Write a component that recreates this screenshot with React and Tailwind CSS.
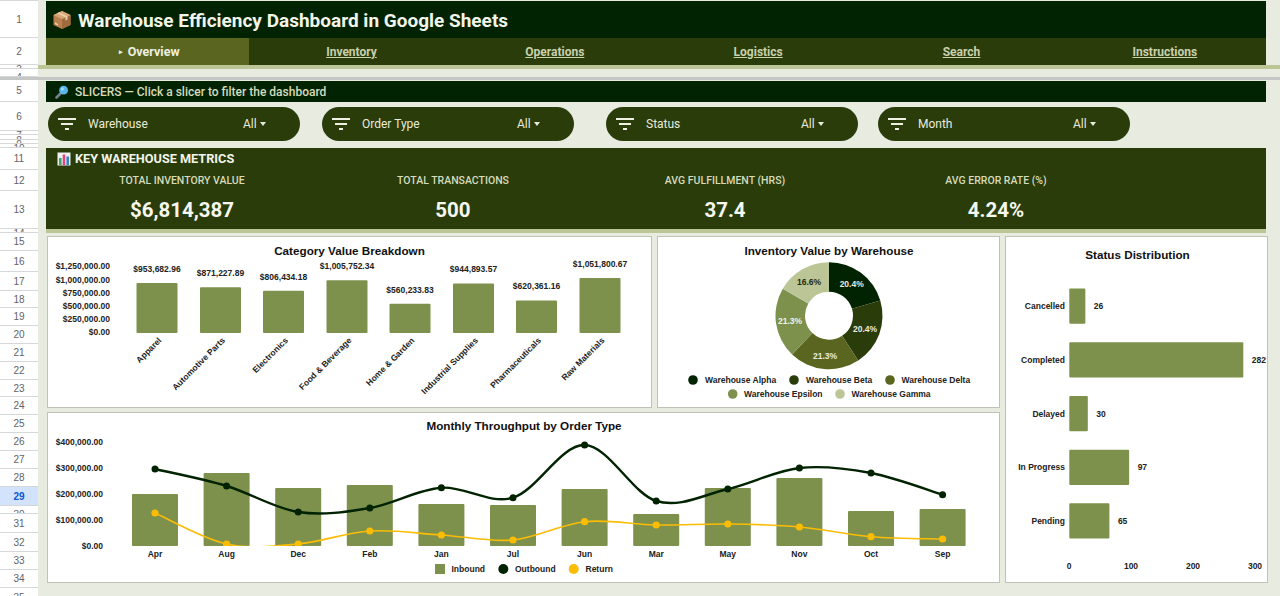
const rowHeaders = [
    ["", 1], ["1", 37], ["2", 27], ["3", 4], ["4", 8], ["", 3], ["5", 22], ["6", 29], ["7", 4], ["8", 5], ["9", 4], ["10", 4],
    ["11", 22], ["12", 21], ["13", 38], ["14", 4], ["15", 18], ["16", 21], ["17", 19], ["18", 17], ["19", 18], ["20", 18],
    ["21", 18], ["22", 18], ["23", 17], ["24", 18], ["25", 18], ["26", 18], ["27", 18], ["28", 18], ["29", 19], ["30", 8],
    ["31", 19], ["32", 19], ["33", 18], ["34", 18], ["35", 9],
];

const tabs = ["Inventory", "Operations", "Logistics", "Search", "Instructions"];

const slicers = [
    { name: "Warehouse", gap: "ml-[2px]" },
    { name: "Order Type", gap: "ml-[22px]" },
    { name: "Status", gap: "ml-[32px]" },
    { name: "Month", gap: "ml-[20px]" },
];

const metrics = [
    { label: "TOTAL INVENTORY VALUE", value: "$6,814,387" },
    { label: "TOTAL TRANSACTIONS", value: "500" },
    { label: "AVG FULFILLMENT (HRS)", value: "37.4" },
    { label: "AVG ERROR RATE (%)", value: "4.24%" },
];

const categories = [
    { name: "Apparel", value: 953682.96, label: "$953,682.96", x: 157 },
    { name: "Automotive Parts", value: 871227.89, label: "$871,227.89", x: 220.5 },
    { name: "Electronics", value: 806434.18, label: "$806,434.18", x: 283.5 },
    { name: "Food & Beverage", value: 1005752.34, label: "$1,005,752.34", x: 347 },
    { name: "Home & Garden", value: 560233.83, label: "$560,233.83", x: 410 },
    { name: "Industrial Supplies", value: 944893.57, label: "$944,893.57", x: 473.5 },
    { name: "Pharmaceuticals", value: 620361.16, label: "$620,361.16", x: 536.5 },
    { name: "Raw Materials", value: 1051800.67, label: "$1,051,800.67", x: 600 },
];

const slices = [
    { pct: 20.4, color: "#012301", lx: 851.7, ly: 284.3, text: "#e8ebe0" },
    { pct: 20.4, color: "#2a3c0a", lx: 865, ly: 329, text: "#e8ebe0" },
    { pct: 21.3, color: "#5a6620", lx: 825, ly: 355.7, text: "#e8ebe0" },
    { pct: 21.3, color: "#7d914d", lx: 790, ly: 321, text: "#f1f3e8" },
    { pct: 16.6, color: "#bcc596", lx: 809, ly: 282.3, text: "#1f2a10" },
];

const months = [
    { m: "Apr", top: 494, out: 469, ret: 513 },
    { m: "Aug", top: 473, out: 486, ret: 544 },
    { m: "Dec", top: 488, out: 512, ret: 544 },
    { m: "Feb", top: 485, out: 508, ret: 531 },
    { m: "Jan", top: 504, out: 487.7, ret: 535 },
    { m: "Jul", top: 505, out: 497.7, ret: 540 },
    { m: "Jun", top: 489, out: 445, ret: 521.7 },
    { m: "Mar", top: 514, out: 501, ret: 525 },
    { m: "May", top: 488, out: 489, ret: 524 },
    { m: "Nov", top: 478, out: 468, ret: 527 },
    { m: "Oct", top: 511, out: 473, ret: 536.7 },
    { m: "Sep", top: 509, out: 494.7, ret: 539 },
];

const statuses = [
    { name: "Cancelled", value: 26, y: 288.5 },
    { name: "Completed", value: 282, y: 342.3 },
    { name: "Delayed", value: 30, y: 396 },
    { name: "In Progress", value: 97, y: 449.7 },
    { name: "Pending", value: 65, y: 503.3 },
];

// smooth line through points, same idea as the chart's "function" curve
function smoothPath(points) {
    let d = `M${points[0][0]} ${points[0][1]}`;
    for (let i = 0; i < points.length - 1; i++) {
        const p0 = points[i - 1] || points[i];
        const p1 = points[i];
        const p2 = points[i + 1];
        const p3 = points[i + 2] || p2;
        const c1x = p1[0] + (p2[0] - p0[0]) / 6;
        const c1y = p1[1] + (p2[1] - p0[1]) / 6;
        const c2x = p2[0] - (p3[0] - p1[0]) / 6;
        const c2y = p2[1] - (p3[1] - p1[1]) / 6;
        d += ` C${c1x} ${c1y} ${c2x} ${c2y} ${p2[0]} ${p2[1]}`;
    }
    return d;
}

function slicePath(cx, cy, r1, r2, from, to) {
    const pt = (r, pct) => {
        const a = (pct / 100) * Math.PI * 2 - Math.PI / 2;
        return `${cx + r * Math.cos(a)} ${cy + r * Math.sin(a)}`;
    };
    const large = to - from > 50 ? 1 : 0;
    return `M${pt(r1, from)} A${r1} ${r1} 0 ${large} 1 ${pt(r1, to)} L${pt(r2, to)} A${r2} ${r2} 0 ${large} 0 ${pt(r2, from)} Z`;
}

function PackageIcon() {
    return (
        <svg width="20" height="20" viewBox="0 0 20 20" className="shrink-0">
            <path d="M10 1 L18.5 5 V15 L10 19 L1.5 15 V5 Z" fill="#b9814f" />
            <path d="M10 9 L18.5 5 V15 L10 19 Z" fill="#a06a3c" />
            <path d="M1.5 5 L10 1 L18.5 5 L10 9 Z" fill="#d6a878" />
            <path d="M5 3.2 L13.5 7.2 V10.5 L15.5 9.6 V6.2 L7 2.2 Z" fill="#eccfa8" />
            <path d="M3 12.5 L6 14 V15.5 L3 14 Z" fill="#e8d9c4" />
        </svg>
    );
}

function SearchIcon() {
    return (
        <svg width="14" height="14" viewBox="0 0 14 14" className="shrink-0">
            <path d="M1.5 12.5 L6 8" stroke="#7a7f8c" strokeWidth="2.6" strokeLinecap="round" />
            <circle cx="8.6" cy="5.2" r="4.4" fill="#5ab4ea" />
            <circle cx="7.4" cy="4" r="1.5" fill="#a8dcf7" />
        </svg>
    );
}

function ChartIcon() {
    return (
        <svg width="14" height="14" viewBox="0 0 14 14" className="shrink-0">
            <rect x="0.5" y="0.5" width="13" height="13" fill="#eef0f2" />
            <rect x="2" y="6" width="2.6" height="7" fill="#3aa76d" />
            <rect x="5.7" y="2.5" width="2.6" height="10.5" fill="#e0457b" />
            <rect x="9.4" y="4.5" width="2.6" height="8.5" fill="#3b82c4" />
        </svg>
    );
}

function FilterIcon() {
    return (
        <svg width="18" height="12" viewBox="0 0 18 12" className="shrink-0">
            <rect x="0" y="0" width="18" height="2" fill="#eef0e4" />
            <rect x="3" y="5" width="12" height="2" fill="#eef0e4" />
            <rect x="7" y="10" width="4" height="2" fill="#eef0e4" />
        </svg>
    );
}

function Slicer({ name, gap }) {
    return (
        <div className={`${gap} flex h-[34px] w-[252px] items-center rounded-full bg-[#2a3c0a] pl-[10px] font-['Roboto',sans-serif] text-[12px] text-[#e8ebdc]`}>
            <FilterIcon />
            <span className="ml-[12px] w-[155px]">{name}</span>
            <span>All</span>
            <span className="ml-[3px] h-0 w-0 border-x-[3.5px] border-t-[4px] border-x-transparent border-t-[#e8ebdc]" />
        </div>
    );
}

function CategoryChart() {
    const axis = [["$1,250,000.00", 266], ["$1,000,000.00", 280], ["$750,000.00", 292.5], ["$500,000.00", 306], ["$250,000.00", 319], ["$0.00", 332]];
    return (
        <svg viewBox="48 237 603 170" className="block h-full w-full font-['Liberation_Sans',sans-serif] font-bold">
            <text x="349.5" y="254.5" textAnchor="middle" fontSize="11.7" fill="#111">Category Value Breakdown</text>
            {axis.map(([label, y]) => (
                <text key={label} x="110" y={y + 3} textAnchor="end" fontSize="8.5" fill="#222">{label}</text>
            ))}
            {categories.map(c => {
                const h = (c.value / 1000000) * 52.4;
                return (
                    <g key={c.name}>
                        <rect x={c.x - 20.5} y={333 - h} width="41" height={h} rx="1" fill="#7d914d" />
                        <text x={c.x} y={333 - h - 11} textAnchor="middle" fontSize="8.5" fill="#222">{c.label}</text>
                        <text transform={`translate(${c.x + 5} 341) rotate(-45)`} textAnchor="end" fontSize="8.5" fill="#222">{c.name}</text>
                    </g>
                );
            })}
        </svg>
    );
}

function DonutChart() {
    let from = 0;
    const legend = [
        ["Warehouse Alpha", 693, 705, 380, "#012301"],
        ["Warehouse Beta", 794, 806, 380, "#2a3c0a"],
        ["Warehouse Delta", 890, 901.5, 380, "#5a6620"],
        ["Warehouse Epsilon", 732.7, 744, 394, "#7d914d"],
        ["Warehouse Gamma", 840, 851.5, 394, "#bcc596"],
    ];
    return (
        <svg viewBox="658 237 341 170" className="block h-full w-full font-['Liberation_Sans',sans-serif] font-bold">
            <text x="829" y="254.5" textAnchor="middle" fontSize="11.7" fill="#111">Inventory Value by Warehouse</text>
            {slices.map((s, i) => {
                const d = slicePath(829, 315.7, 53.5, 24, from, from + s.pct);
                from += s.pct;
                return <path key={i} d={d} fill={s.color} />;
            })}
            {slices.map((s, i) => (
                <text key={i} x={s.lx} y={s.ly + 3} textAnchor="middle" fontSize="8.5" fill={s.text}>{s.pct.toFixed(1)}%</text>
            ))}
            {legend.map(([name, cx, tx, y, color]) => (
                <g key={name}>
                    <circle cx={cx} cy={y} r="4.8" fill={color} />
                    <text x={tx} y={y + 3} fontSize="8.5" fill="#222">{name}</text>
                </g>
            ))}
        </svg>
    );
}

function StatusChart() {
    return (
        <svg viewBox="1006 237 261 345" className="block h-full w-full font-['Liberation_Sans',sans-serif] font-bold">
            <text x="1137.5" y="258.5" textAnchor="middle" fontSize="11.7" fill="#111">Status Distribution</text>
            {statuses.map(s => {
                const w = s.value * 0.617;
                return (
                    <g key={s.name}>
                        <rect x="1069.3" y={s.y} width={w} height="35.2" rx="1" fill="#7d914d" />
                        <text x="1065" y={s.y + 20.6} textAnchor="end" fontSize="8.5" fill="#222">{s.name}</text>
                        <text x={1069.3 + w + 8.5} y={s.y + 20.6} fontSize="8.5" fill="#222">{s.value}</text>
                    </g>
                );
            })}
            {[0, 100, 200, 300].map((v, i) => (
                <text key={v} x={1069 + i * 62} y="568.7" textAnchor="middle" fontSize="8.5" fill="#222">{v}</text>
            ))}
        </svg>
    );
}

function ThroughputChart() {
    const axis = [["$400,000.00", 442], ["$300,000.00", 468], ["$200,000.00", 494], ["$100,000.00", 520], ["$0.00", 545.5]];
    const xs = months.map((_, i) => 155 + i * 71.6);
    const outbound = months.map((m, i) => [xs[i], m.out]);
    const inReturn = months.map((m, i) => [xs[i], m.ret]);
    return (
        <svg viewBox="48 413 951 169" className="block h-full w-full font-['Liberation_Sans',sans-serif] font-bold">
            <defs>
                <clipPath id="plot">
                    <rect x="110" y="430" width="880" height="116" />
                </clipPath>
            </defs>
            <text x="524" y="429.5" textAnchor="middle" fontSize="11.7" fill="#111">Monthly Throughput by Order Type</text>
            {axis.map(([label, y]) => (
                <text key={label} x="103" y={y + 3} textAnchor="end" fontSize="8.5" fill="#222">{label}</text>
            ))}
            {months.map((m, i) => (
                <g key={m.m}>
                    <rect x={xs[i] - 23} y={m.top} width="46" height={546 - m.top} rx="1" fill="#7d914d" />
                    <text x={xs[i]} y="557.3" textAnchor="middle" fontSize="8.5" fill="#222">{m.m}</text>
                </g>
            ))}
            <g clipPath="url(#plot)">
                <path d={smoothPath(inReturn)} fill="none" stroke="#fbbc04" strokeWidth="1.6" />
                {inReturn.map(([x, y]) => <circle key={x} cx={x} cy={y} r="3.6" fill="#fbbc04" />)}
            </g>
            <path d={smoothPath(outbound)} fill="none" stroke="#012301" strokeWidth="2.4" />
            {outbound.map(([x, y]) => <circle key={x} cx={x} cy={y} r="3.5" fill="#012301" />)}
            <rect x="435" y="564" width="10" height="10" fill="#7d914d" />
            <text x="451.5" y="572" fontSize="8.5" fill="#222">Inbound</text>
            <circle cx="503.3" cy="569" r="5" fill="#012301" />
            <text x="515" y="572" fontSize="8.5" fill="#222">Outbound</text>
            <circle cx="573.7" cy="569" r="5" fill="#fbbc04" />
            <text x="585.5" y="572" fontSize="8.5" fill="#222">Return</text>
        </svg>
    );
}

function App() {
    return (
        <div className="flex h-[596px] w-[1280px] overflow-hidden bg-[#e8ebe0] font-['Roboto',sans-serif]">
            {/* sheet row numbers */}
            <div className="flex w-[38px] shrink-0 flex-col bg-white font-['Liberation_Sans',sans-serif] text-[10px] text-[#5f6368]">
                {rowHeaders.map(([label, h], i) =>
                    h < 10 ? (
                        // squeezed rows: only the top of the number shows, as in the sheet
                        <div
                            key={i}
                            style={{ height: h, paddingTop: Math.max(h - 4, 0) }}
                            className={`shrink-0 overflow-hidden text-center leading-none ${label === "" && i > 0 ? "bg-[#c4c7c5]" : "border-b border-[#d5d7d9]"}`}>
                            {label}
                        </div>
                    ) : (
                        <div
                            key={i}
                            style={{ height: h }}
                            className={`flex shrink-0 items-center justify-center border-b border-[#d5d7d9] ${label === "29" ? "bg-[#d3e3fd] font-bold text-[#0b57d0]" : ""}`}>
                            {label}
                        </div>
                    ),
                )}
            </div>

            <div className="flex min-w-0 flex-1 flex-col">
                <div className="h-px shrink-0" />
                <div className="ml-2 mr-3.5 flex h-[37px] shrink-0 items-center gap-[6px] bg-[#012301] pl-[6px] text-[19px] font-bold text-[#f3f5ea]">
                    <PackageIcon />
                    <h1 className="pt-[3px]">Warehouse Efficiency Dashboard in Google Sheets</h1>
                </div>
                <nav className="ml-2 mr-3.5 grid h-[27px] shrink-0 grid-cols-6 bg-[#2a3c0a] text-[12px] font-bold text-[#c9d0aa]">
                    <div className="flex items-center justify-center bg-[#5a6620] pl-[3px] pt-[2px] text-[12.5px] text-[#eef0e2]">
                        <span className="mr-[5px] text-[7px]">▸</span>Overview
                    </div>
                    {tabs.map(t => (
                        <a key={t} className="flex items-center justify-center pl-px underline">{t}</a>
                    ))}
                </nav>
                <div className="h-[4px] shrink-0 bg-[#bcc596]" />
                <div className="h-[8px] shrink-0" />
                <div className="h-[3px] shrink-0 bg-[#c4c7c5]" />
                <div className="h-px shrink-0" />

                <div className="ml-2 mr-3.5 flex h-[21px] shrink-0 items-center gap-[6px] bg-[#012301] pl-[9px] text-[12px] font-medium text-[#d5dbbb]">
                    <SearchIcon />
                    <span>SLICERS — Click a slicer to filter the dashboard</span>
                </div>
                <div className="ml-2 flex h-[46px] shrink-0 items-start pt-[5px]">
                    {slicers.map(s => <Slicer key={s.name} {...s} />)}
                </div>

                <section className="ml-2 mr-3.5 h-[81px] shrink-0 bg-[#2a3c0a]">
                    <div className="flex h-[22px] items-center gap-[4px] pl-[11px] text-[12.7px] font-bold text-[#f3f5ea]">
                        <ChartIcon />
                        <span>KEY WAREHOUSE METRICS</span>
                    </div>
                    <div className="grid grid-cols-[272px_270px_274px_268px]">
                        {metrics.map(m => (
                            <div key={m.label} className="text-center">
                                <div className="flex h-[21px] items-center justify-center text-[10.5px] font-medium text-[#d5dbbb]">{m.label}</div>
                                <div className="flex h-[37px] items-center justify-center pt-[2px] text-[20.5px] font-bold text-[#f6f7ef]">{m.value}</div>
                            </div>
                        ))}
                    </div>
                </section>
                <div className="ml-2 mr-3.5 h-[4px] shrink-0 bg-[#bcc596]" />

                <div className="ml-[9px] mt-[3px] grid grid-cols-[605px_343px_263px] grid-rows-[172px_171px] gap-x-[5px] gap-y-[4px]">
                    <div className="border border-[#bfc2b4] bg-white"><CategoryChart /></div>
                    <div className="border border-[#bfc2b4] bg-white"><DonutChart /></div>
                    <div className="row-span-2 border border-[#bfc2b4] bg-white"><StatusChart /></div>
                    <div className="col-span-2 border border-[#bfc2b4] bg-white"><ThroughputChart /></div>
                </div>
            </div>
        </div>
    );
}

export default App;
